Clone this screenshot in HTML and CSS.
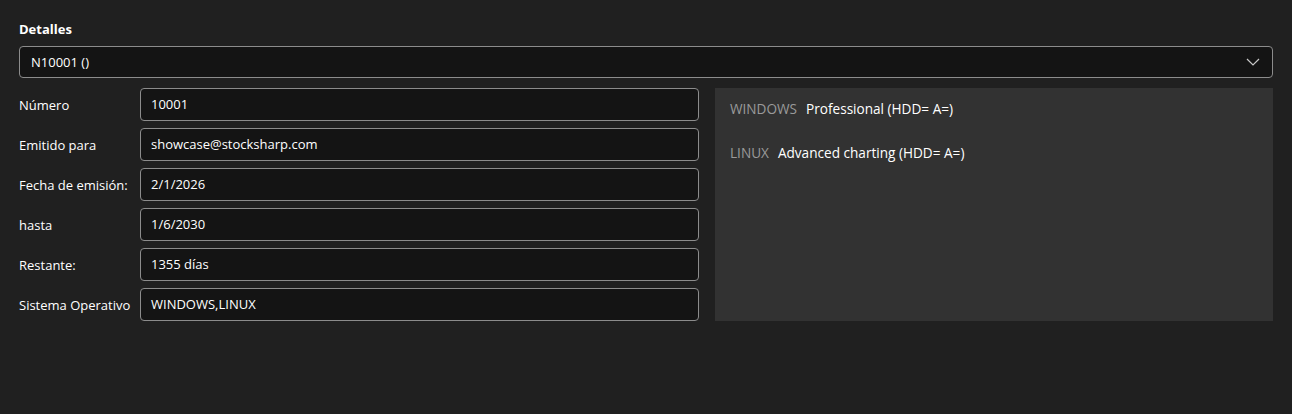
FILE: index.html
```html
<!DOCTYPE html>
<html lang="es">
<head>
<meta charset="utf-8">
<link rel="stylesheet" href="styles.css">
</head>
<body>
<div class="page">
  <div class="title">Detalles</div>
  <div class="select">
    <span>N10001 ()</span>
    <svg class="chev" width="14" height="8" viewBox="0 0 14 8"><path d="M1 1 L7 7 L13 1" fill="none" stroke="#c8c8c8" stroke-width="1.2"/></svg>
  </div>
  <div class="main">
    <div class="form">
      <div class="row"><div class="lbl">Número</div><div class="inp">10001</div></div>
      <div class="row"><div class="lbl">Emitido para</div><div class="inp">showcase@stocksharp.com</div></div>
      <div class="row"><div class="lbl">Fecha de emisión:</div><div class="inp">2/1/2026</div></div>
      <div class="row"><div class="lbl">hasta</div><div class="inp">1/6/2030</div></div>
      <div class="row"><div class="lbl">Restante:</div><div class="inp">1355 días</div></div>
      <div class="row"><div class="lbl">Sistema Operativo</div><div class="inp">WINDOWS,LINUX</div></div>
    </div>
    <div class="panel">
      <div class="item"><span class="os">WINDOWS</span><span class="val">Professional (HDD= A=)</span></div>
      <div class="item"><span class="os">LINUX</span><span class="val">Advanced charting (HDD= A=)</span></div>
    </div>
  </div>
</div>
</body>
</html>
```

FILE: styles.css
```css
html, body {
  margin: 0;
  padding: 0;
  background: #202020;
  color: #ffffff;
  font-family: "Open Sans", "Noto Sans", sans-serif;
  font-size: 13px;
}
.page {
  padding: 19px 19px 0 19px;
}
.title {
  font-weight: 700;
  height: 20px;
  line-height: 20px;
  margin-bottom: 7px;
}
.select {
  height: 30px;
  border: 1px solid #8c8c8c;
  border-radius: 4px;
  background: #141414;
  display: flex;
  align-items: center;
  justify-content: space-between;
  padding: 0 12px 0 11px;
}
.chev { display: block; }
.main {
  display: flex;
  margin-top: 10px;
  gap: 16px;
}
.form {
  display: flex;
  flex-direction: column;
  gap: 7px;
  width: 680px;
  flex: none;
}
.row {
  display: flex;
  align-items: center;
}
.lbl {
  width: 121px;
  flex: none;
}
.inp {
  width: 547px;
  height: 31px;
  line-height: 31px;
  border: 1px solid #8c8c8c;
  border-radius: 4px;
  background: #141414;
  padding: 0 0 0 10px;
}
.panel {
  flex: 1;
  background: #323232;
  height: 233px;
  padding: 11px 15px;
  box-sizing: border-box;
  font-size: 13.6px;
}
.item {
  height: 20px;
  line-height: 20px;
  margin-bottom: 24px;
}
.os { color: #9a9a9a; margin-right: 9px; }
.val { color: #ffffff; }
```
